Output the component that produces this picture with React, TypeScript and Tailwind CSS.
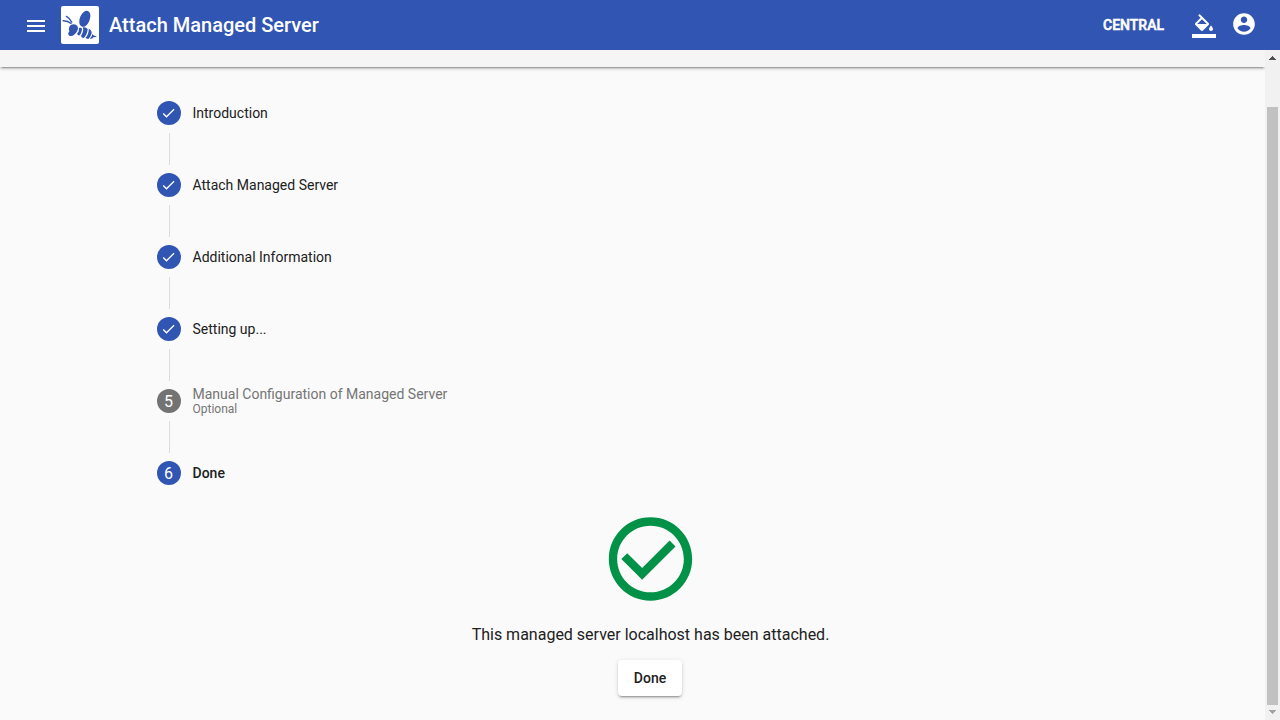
import React from "react";

function Bee() {
  return (
    <svg viewBox="0 0 38 38" className="h-[38px] w-[38px] text-[#3155b2]" fill="currentColor">
      <g fill="none" stroke="currentColor" strokeLinecap="round" strokeWidth="1.4">
        <path d="M5.4 10.4C7.2 11.4 9.4 13.2 10.8 16.2" />
        <path d="M2.2 14.7C5 14.6 8 15.6 10 17.4" />
      </g>
      <ellipse cx="23.8" cy="12.8" rx="5" ry="8.4" transform="rotate(22 23.8 12.8)" />
      <path d="M8.2 21.2C9 18.4 12.6 17.4 15 18.8C17.2 20.2 17.6 22.8 16.2 25C14.6 28 12 30.4 9.2 30C6.6 29.2 6.9 26.6 8.5 25.2C7.8 24.2 7.7 22.5 8.2 21.2Z" />
      <path d="M17.8 22.2C19 21.4 20.3 21.6 21 22.5C20.9 25.4 20 28 18.3 29.6C16.8 29.6 16 28.5 16.3 27.3C17.6 26 18.2 24.6 17.8 22.2Z" />
      <path d="M21.9 21.3C24 21 26 21.8 26.7 23.2C26.2 27 25 30 22.8 32C21 31.9 20 31 20.1 29.5C22 27 22.7 24.5 21.9 21.3Z" />
      <path d="M27.8 22.8C29.6 23.5 30.5 25 30.7 26.8C30 29.5 29 31.5 27.4 32.9C26 32.9 24.9 32.6 24.5 31.8C26.8 29.5 27.8 26.5 27.8 22.8Z" />
      <path d="M31.4 27.8C32 29.2 33.3 30 36 30.6C34 31.4 33 31.2 32.2 31.6C31.2 32.8 30 33.1 28.9 32.6C30.3 31.3 31 29.8 31.4 27.8Z" />
    </svg>
  );
}

function Header() {
  return (
    <header className="flex h-[50px] shrink-0 items-center bg-[#3155b2] pr-6 pl-6 text-white">
      <svg viewBox="0 0 24 24" className="mt-[2px] h-6 w-6" fill="currentColor">
        <path d="M3 18h18v-2H3v2zm0-5h18v-2H3v2zm0-7v2h18V6H3z" />
      </svg>
      <div className="ml-[13px] overflow-hidden rounded-[2px] bg-white">
        <Bee />
      </div>
      <h1 className="ml-[10px] text-[20px] leading-8 font-medium">Attach Managed Server</h1>
      <span className="ml-auto text-[14px] leading-5 font-medium [-webkit-text-stroke:0.5px_white]">CENTRAL</span>
      <svg viewBox="0 0 24 24" className="mt-[2px] ml-[28px] h-6 w-6" fill="currentColor">
        <path d="M16.56 8.94L7.62 0 6.21 1.41l2.38 2.38-5.15 5.15c-.59.59-.59 1.54 0 2.12l5.5 5.5c.29.29.68.44 1.06.44s.77-.15 1.06-.44l5.5-5.5c.59-.58.59-1.53 0-2.12zM5.21 10L10 5.21 14.79 10H5.21zM19 11.5s-2 2.17-2 3.5c0 1.1.9 2 2 2s2-.9 2-2c0-1.33-2-3.5-2-3.5zM0 20h24v4H0z" />
      </svg>
      <svg viewBox="0 0 24 24" className="-mt-[2px] -mr-[1px] ml-[15px] h-[26px] w-[26px]" fill="currentColor">
        <path d="M12 2C6.48 2 2 6.48 2 12s4.48 10 10 10 10-4.48 10-10S17.52 2 12 2zm0 3c1.66 0 3 1.34 3 3s-1.34 3-3 3-3-1.34-3-3 1.34-3 3-3zm0 14.2c-2.5 0-4.71-1.28-6-3.22.03-1.99 4-3.08 6-3.08 1.99 0 5.97 1.09 6 3.08-1.29 1.94-3.5 3.22-6 3.22z" />
      </svg>
    </header>
  );
}

type Step = { label: string; state: "done" | "pending" | "active"; optional?: boolean };

const steps: Step[] = [
  { label: "Introduction", state: "done" },
  { label: "Attach Managed Server", state: "done" },
  { label: "Additional Information", state: "done" },
  { label: "Setting up...", state: "done" },
  { label: "Manual Configuration of Managed Server", state: "pending", optional: true },
  { label: "Done", state: "active" },
];

const labelStyle = {
  done: "text-[#212121]",
  pending: "text-[#757575]",
  active: "font-medium text-[#212121]",
};

function StepRow({ step, index }: { step: Step; index: number }) {
  return (
    <li className="flex h-10 items-center gap-3">
      <span
        className={`flex h-6 w-6 shrink-0 items-center justify-center rounded-full text-base leading-6 text-white ${
          step.state === "pending" ? "bg-[#737373]" : "bg-[#3155b2]"
        }`}
      >
        {step.state === "done" ? (
          <svg viewBox="0 0 24 24" className="mr-px h-4 w-4" fill="currentColor">
            <path transform="translate(0.75 0)" d="M9 16.17L4.83 12l-1.42 1.41L9 19 21 7l-1.41-1.41z" />
          </svg>
        ) : (
          <span className="pt-[2px]">{index + 1}</span>
        )}
      </span>
      <div className={labelStyle[step.state]}>
        <div className="text-[14px] leading-4">{step.label}</div>
        {step.optional && <div className="text-[12px] leading-[14px]">Optional</div>}
      </div>
    </li>
  );
}

function Scrollbar() {
  return (
    <div className="flex w-[15px] shrink-0 flex-col items-center bg-[#f1f1f1]">
      <svg viewBox="0 0 15 15" className="h-[15px] w-[15px] shrink-0" fill="#505050" shapeRendering="crispEdges">
        <path d="M4 10h7v-1h-1v-1h-1v-1h-1v-1h-1v1h-1v1h-1v1h-1z" />
      </svg>
      <div className="mt-[42px] w-[11px] flex-1 bg-[#c1c1c1]" />
      <svg viewBox="0 0 15 15" className="h-[15px] w-[15px] shrink-0" fill="#a3a3a3" shapeRendering="crispEdges">
        <path d="M4 5h7v1h-1v1h-1v1h-1v1h-1v-1h-1v-1h-1v-1h-1z" />
      </svg>
    </div>
  );
}

export default function App() {
  return (
    <div className="flex h-screen flex-col overflow-hidden bg-[#fafafa] font-['Roboto',sans-serif] text-[#212121]">
      <Header />
      <div className="flex min-h-0 flex-1">
        <main className="min-w-0 flex-1 overflow-hidden">
          <div className="h-[17px] bg-[#f5f5f5] shadow-[0_3px_1px_-2px_rgba(0,0,0,0.2),0_2px_2px_0_rgba(0,0,0,0.14),0_1px_5px_0_rgba(0,0,0,0.12)]" />
          <div className="mx-auto w-[1000px] px-6 pt-[26px]">
            <ol>
              {steps.map((step, i) => (
                <React.Fragment key={step.label}>
                  {i > 0 && <li className="ml-3 h-8 w-px bg-[#dcdcdc]" aria-hidden="true" />}
                  <StepRow step={step} index={i} />
                </React.Fragment>
              ))}
            </ol>
            <section className="ml-9 flex flex-col items-center pt-4">
              <svg viewBox="0 0 24 24" className="mr-px h-[100px] w-[100px] text-[#029247]" fill="currentColor">
                <path transform="translate(0.12 0)" d="M16.59 7.58L10 14.17l-3.59-3.58L5 12l5 5 8-8zM12 2C6.48 2 2 6.48 2 12s4.48 10 10 10 10-4.48 10-10S17.52 2 12 2zm0 18c-4.42 0-8-3.58-8-8s3.58-8 8-8 8 3.58 8 8-3.58 8-8 8z" />
              </svg>
              <p className="mt-[14px] text-base leading-6">This managed server localhost has been attached.</p>
              <button className="mt-[13px] mr-[0.9px] h-9 w-16 rounded-[4px] bg-white text-[14px] leading-9 font-medium shadow-[0_3px_1px_-2px_rgba(0,0,0,0.2),0_2px_2px_0_rgba(0,0,0,0.14),0_1px_5px_0_rgba(0,0,0,0.12)]">
                Done
              </button>
            </section>
          </div>
        </main>
        <Scrollbar />
      </div>
    </div>
  );
}
